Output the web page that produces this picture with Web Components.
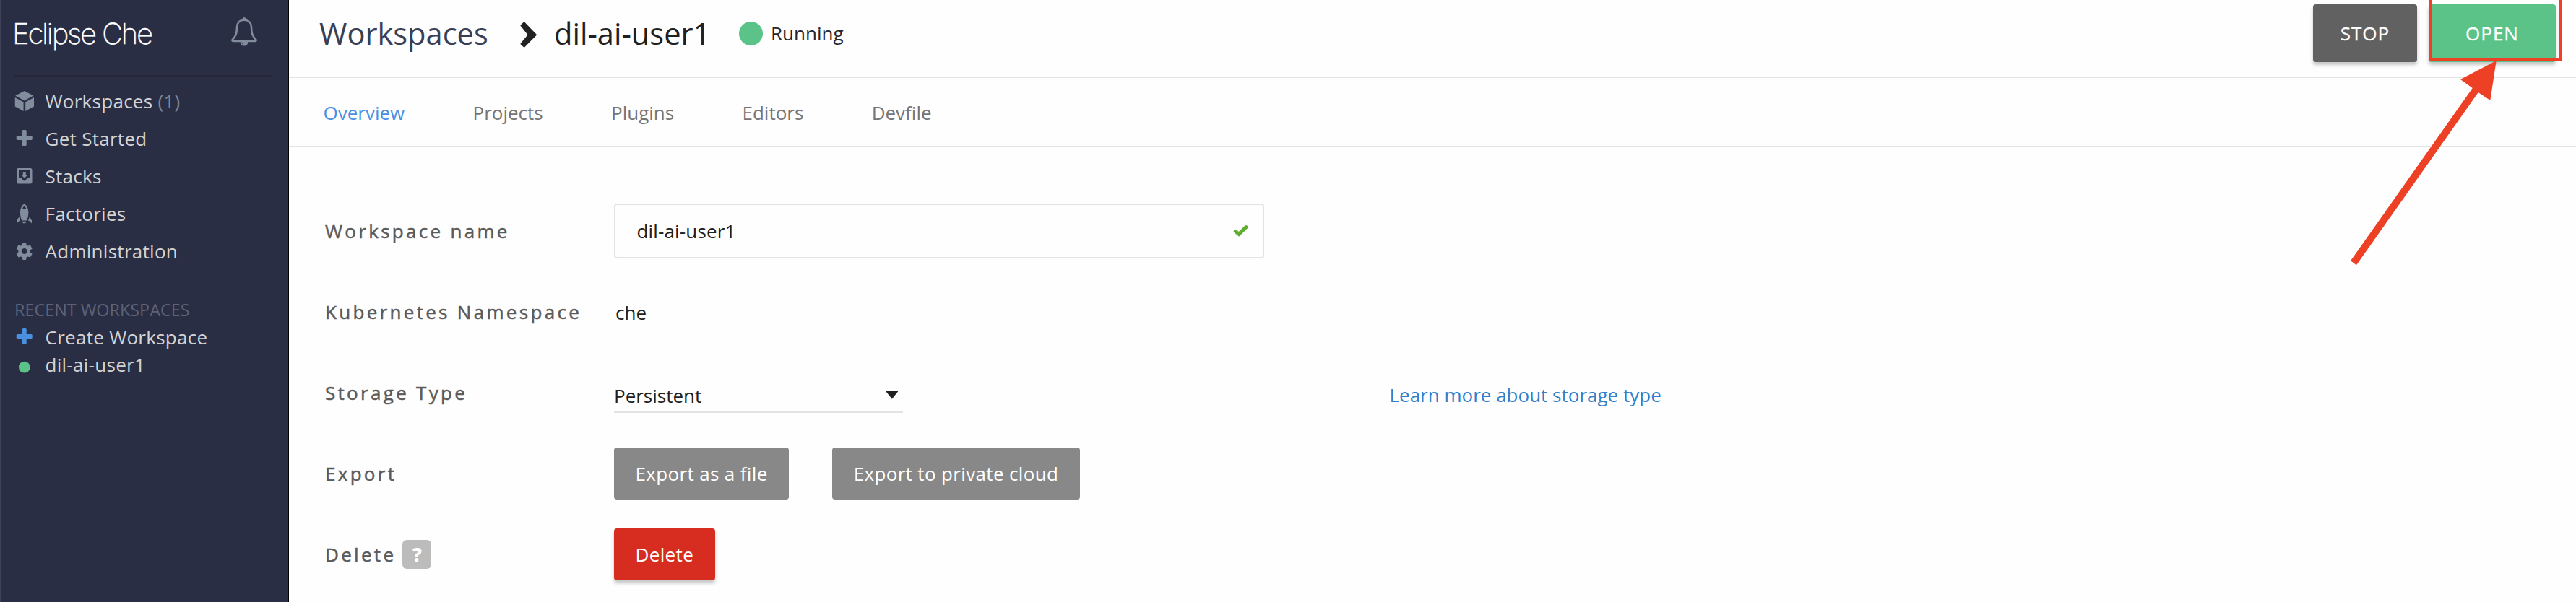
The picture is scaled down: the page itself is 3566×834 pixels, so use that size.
<!DOCTYPE html>
<html lang="en">
<head>
<meta charset="utf-8">
<title>Eclipse Che</title>
<style>
  html, body { margin: 0; height: 100%; overflow: hidden; background: #fefefe; }
  body { font: 400 26px "Open Sans", sans-serif; color: #202020; }
</style>
</head>
<body>
<che-app></che-app>
<script>
const define = (name, markup) => {
  const tpl = document.createElement('template');
  tpl.innerHTML = markup;
  customElements.define(name, class extends HTMLElement {
    constructor() {
      super();
      this.attachShadow({ mode: 'open' }).append(tpl.content.cloneNode(true));
    }
  });
};

const ICONS = {
  bell: [40, 42, '<path fill="none" stroke="currentColor" stroke-width="2.6" stroke-linejoin="round" d="M20 5.8C13.5 5.8 10.2 10 10 15.5C9.8 24 9 27.5 3.6 33.2Q3 34.9 5 34.9H35Q37 34.9 36.4 33.2C31 27.5 30.2 24 30 15.5C29.8 10 26.5 5.8 20 5.8Z"/><circle cx="20" cy="4.2" r="2.3" fill="currentColor"/><path d="M14.5 35.5H25.5C25.5 43.5 14.5 43.5 14.5 35.5Z" fill="currentColor"/><path d="M16.6 36.5Q17 39 19 39.6" fill="none" stroke="#292e44" stroke-width=".8"/>'],
  cube: [28, 28, '<path fill="currentColor" d="M13.7 0 26.3 6.5 13.7 13.5 1.2 6.5ZM.8 9 12.6 15.5V28L.8 21.6ZM27 9 15.2 15.5V28L27 21.6Z"/>'],
  plus: [28, 28, '<path fill="currentColor" d="M12.2 2h3q1.500 0 1.500 1.500V10h6.500q1.500 0 1.500 1.500v3q0 1.500-1.500 1.500h-6.500v6.600q0 1.500-1.500 1.500h-3q-1.500 0-1.500-1.500V16H4.200q-1.500 0-1.500-1.500v-3Q2.700 10 4.200 10h6.500V3.500Q10.700 2 12.200 2Z"/>'],
  stack: [28, 28, '<path fill="currentColor" fill-rule="evenodd" d="M5.500 3H22q2.500 0 2.500 2.500V22q0 2.500-2.500 2.500H5.500Q3 24.500 3 22V5.500Q3 3 5.500 3ZM6 5.800V17h3.600q1 0 1.300 1.200Q11.600 20.500 13.750 20.500T16.600 18.200Q16.900 17 17.900 17H21.600V5.800ZM11.800 8h4v4h3L13.800 16.700 9 12h2.800Z"/>'],
  rocket: [28, 28, '<path fill="currentColor" fill-rule="evenodd" d="M13.600 0C17.600 3.200 19.400 7.500 19.400 12.500Q19.300 18.500 17.300 23.500H10Q8 18.500 7.900 12.500C7.900 7.500 9.600 3.200 13.600 0ZM13.600 3.300Q11.300 5 11 7.500H16.300Q16 5 13.600 3.300ZM11.200 24.700H16L15.500 27.300H11.700ZM6.500 18.500 8.200 23.800 6.500 24.300 3.100 27.500V23.500ZM20.800 18.500 19.100 23.800 20.800 24.300 24 27.500V23.500Z"/>'],
  gear: [28, 28, '<path fill="currentColor" fill-rule="evenodd" d="M11.400 2H16l.6 3.400 2 1.200 3.300-1.200 2.700 5.100-2.700 2.300v2.700l2.700 2.300-2.700 4.800-3.300-1.200-2 1.200L16 26H11.400L10.800 22.600 8.800 21.400 5.500 22.600 2.700 17.800 5.400 15.500V12.800L2.700 10.500 5.500 5.400 8.800 6.600 10.800 5.400ZM13.700 10a4 4 0 1 0 .01 0Z"/>'],
  dot: [28, 28, '<circle cx="13.800" cy="17.600" r="7.900" fill="currentColor"/>'],
  chevron: [24, 38, '<path fill="#222" d="M5 1.500Q5.600.9 6.300 1.700L22.500 18.500Q23.200 19.200 22.500 20L6.300 36.300Q5.500 37 4.800 36.200L.8 32.500Q0 31.700.8 30.900L10.500 19.300.8 7Q0 6.200.8 5.400Z"/>'],
  check: [22, 18, '<path fill="none" stroke="#60ad2f" stroke-width="5" stroke-linecap="round" stroke-linejoin="miter" d="M3.200 9.400 8 13.300 18 3.600"/>'],
  caret: [20, 12, '<path fill="#202020" d="M.8.5H18.800L9.800 11.800Z"/>']
};

customElements.define('che-icon', class extends HTMLElement {
  constructor() { super(); this.attachShadow({ mode: 'open' }); }
  connectedCallback() {
    const [w, h, body] = ICONS[this.getAttribute('name')];
    this.shadowRoot.innerHTML = `<style>:host{display:block;flex:none}svg{display:block;overflow:visible}</style>
      <svg width="${w}" height="${h}" viewBox="0 0 ${w} ${h}">${body}</svg>`;
  }
});

define('nav-item', `<style>
  :host { display: flex; align-items: center; gap: 14.5px; height: 52px; line-height: 52px; color: #d3d3d3; white-space: nowrap; }
  .icon { color: #818d9c; }
  ::slotted(i) { font-style: normal; color: #7b889b; }
</style><div class="icon"><slot name="icon"></slot></div><div><slot></slot></div>`);

define('side-bar', `<style>
  :host { display: block; box-sizing: border-box; width: 400px; height: 834px; padding: 0 20px 0 19px; background: #292e44;
    border-left: 1px solid #3d4258; border-right: 2px solid #000; letter-spacing: .28px; }
  header { display: flex; justify-content: space-between; box-sizing: border-box; height: 106px; border-bottom: 2px solid #24283a; }
  .logo { font: 200 40px/93px Inter, sans-serif; letter-spacing: -2.2px; color: #fff; margin-left: -3px; white-space: nowrap; -webkit-text-stroke: .3px #fff; }
  che-icon { color: #818d9c; }
  header che-icon { margin: 22px 20px 0 0; }
  nav { padding-top: 8px; }
  h2 { margin: 37px 0 0; height: 37px; font: 400 23.4px/37px "Open Sans", sans-serif; letter-spacing: 0; color: #5d6277; }
  .recent nav-item { height: 38px; line-height: 38px; }
  .blue { color: #4a90e2; }
  .green { color: #5bc387; }
</style>
<header><div class="logo">Eclipse Che</div><che-icon name="bell"></che-icon></header>
<nav>
  <nav-item><che-icon slot="icon" name="cube"></che-icon>Workspaces <i>(1)</i></nav-item>
  <nav-item><che-icon slot="icon" name="plus"></che-icon>Get Started</nav-item>
  <nav-item><che-icon slot="icon" name="stack"></che-icon>Stacks</nav-item>
  <nav-item><che-icon slot="icon" name="rocket"></che-icon>Factories</nav-item>
  <nav-item><che-icon slot="icon" name="gear"></che-icon>Administration</nav-item>
</nav>
<h2>RECENT WORKSPACES</h2>
<div class="recent">
  <nav-item><che-icon class="blue" slot="icon" name="plus"></che-icon>Create Workspace</nav-item>
  <nav-item><che-icon class="green" slot="icon" name="dot"></che-icon>dil-ai-user1</nav-item>
</div>`);

define('che-button', `<style>
  :host { display: block; box-sizing: border-box; height: 72px; line-height: 72px; padding: 0 29.5px; border-radius: 4px;
    background: #888; color: #fff; text-align: center; white-space: nowrap; letter-spacing: .35px; }
  :host([kind=danger]) { background: #d72c20; box-shadow: 0 4px 5px rgba(0,0,0,.22); }
  :host([kind=stop]), :host([kind=open]) { height: 80px; line-height: 80px; padding: 0; letter-spacing: 1px;
    width: 144px; background: #616161; box-shadow: 0 4px 5px rgba(0,0,0,.22); -webkit-text-stroke: .3px #fff; }
  :host([kind=open]) { width: 176px; background: #5bc387; }
</style><slot></slot>`);

define('page-header', `<style>
  :host { display: flex; box-sizing: border-box; height: 108px; padding: 0 28px 0 42px; border-bottom: 2px solid #e3e3e3; line-height: 92px; white-space: nowrap; }
  .crumb { font-size: 41.6px; color: #394056; width: 277px; }
  .name { font-size: 41.6px; color: #202020; width: 256px; padding-left: 23px; }
  che-icon { margin: 29px 0 0 1px; }
  .dot { width: 33px; height: 33px; border-radius: 50%; background: #5bc387; margin-top: 30px; }
  .status { margin-left: 11px; line-height: 93px; color: #25252b; }
  .actions { margin: 6px 0 0 auto; display: flex; gap: 16px; }
</style>
<div class="crumb">Workspaces</div><che-icon name="chevron"></che-icon><div class="name">dil-ai-user1</div>
<div class="dot"></div><div class="status">Running</div>
<div class="actions"><che-button kind="stop">STOP</che-button><che-button kind="open">OPEN</che-button></div>`);

define('tab-bar', `<style>
  :host { display: flex; gap: 94.3px; box-sizing: border-box; height: 96px; padding-left: 47.5px; line-height: 96.5px; border-bottom: 2px solid #e3e3e3; color: #757575; }
  ::slotted([aria-selected=true]) { color: #4a90e2; }
</style><slot></slot>`);

define('form-row', `<style>
  :host { display: grid; grid-template-columns: 400px 1fr; height: 112px; align-items: center; }
  .label { display: flex; align-items: center; letter-spacing: 3.3px; -webkit-text-stroke: .5px #5a5a5a; color: #5a5a5a; white-space: nowrap; }
  .field { display: flex; align-items: center; }
</style><div class="label"><slot name="label"></slot></div><div class="field"><slot></slot></div>`);

define('text-field', `<style>
  :host { display: flex; align-items: center; justify-content: space-between; box-sizing: border-box; width: 900px; height: 76px;
    padding: 0 19px 0 29.5px; border: 2px solid #e3e3e3; border-radius: 4px; letter-spacing: .15px; }
</style><span><slot></slot></span><che-icon name="check"></che-icon>`);

define('select-field', `<style>
  :host { display: flex; align-items: center; justify-content: space-between; box-sizing: border-box; width: 400px; height: 48px;
    padding: 0 5px 0 0; border-bottom: 2px solid #e3e3e3; margin-top: 8px; }
  span { margin-top: 2px; }
</style><span><slot></slot></span><che-icon name="caret"></che-icon>`);

define('help-badge', `<style>
  :host { display: block; width: 40px; height: 40px; margin-left: 9px; border-radius: 6px; background: #bcbcbc; color: #fff;
    font: 800 26px/40px "Open Sans", sans-serif; letter-spacing: 0; text-align: center; -webkit-text-stroke: 0; }
</style><slot></slot>`);

define('callout-arrow', `<style>
  :host { position: absolute; left: 3240px; top: 0; pointer-events: none; }
  svg { display: block; }
</style><svg width="326" height="380" viewBox="3240 0 326 380">
  <path d="M3365-2V83H3544V-2" fill="none" stroke="#ed4024" stroke-width="4"/>
  <path d="M3455.7 84 3447.3 139 3430.7 128 3262 367.3 3254 361.3 3422.7 122 3406 110Z" fill="#ed4024"/></svg>`);

define('che-app', `<style>
  :host { display: flex; width: 3566px; height: 834px; position: relative; }
  main { flex: 1; }
  form { display: block; padding: 60px 0 0 50px; }
  .link { color: #337fc9; margin-left: 673.5px; margin-top: 6px; }
  .value { margin: 2px 0 0 2px; }
  .gap { width: 60px; }
</style>
<side-bar></side-bar>
<main>
  <page-header></page-header>
  <tab-bar><span aria-selected="true">Overview</span><span>Projects</span><span>Plugins</span><span>Editors</span><span>Devfile</span></tab-bar>
  <form>
    <form-row><span slot="label">Workspace name</span><text-field>dil-ai-user1</text-field></form-row>
    <form-row><span slot="label">Kubernetes Namespace</span><span class="value">che</span></form-row>
    <form-row><span slot="label">Storage Type</span><select-field>Persistent</select-field><span class="link">Learn more about storage type</span></form-row>
    <form-row><span slot="label">Export</span><che-button>Export as a file</che-button><div class="gap"></div><che-button>Export to private cloud</che-button></form-row>
    <form-row><span slot="label">Delete</span><help-badge slot="label">?</help-badge><che-button kind="danger">Delete</che-button></form-row>
  </form>
</main>
<callout-arrow></callout-arrow>`);
</script>
</body>
</html>
